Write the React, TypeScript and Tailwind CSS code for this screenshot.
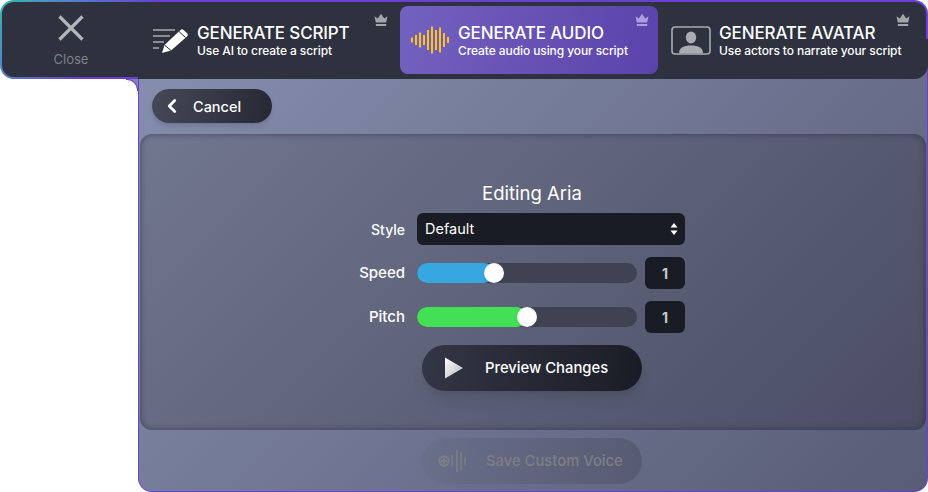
import { ChevronLeft } from 'lucide-react';

const font = "font-['Inter','Liberation_Sans',sans-serif]";

function Crown({ className }: { className: string }) {
  return (
    <svg width="14" height="14" viewBox="0 0 14 14" className={className} fill="currentColor">
      <path d="M0.5 3.2 L3.8 5.6 L7 0.8 L10.2 5.6 L13.5 3.2 L12.2 9.6 L1.8 9.6 Z" />
      <rect x="1.8" y="11" width="10.4" height="2" />
    </svg>
  );
}

function ScriptIcon() {
  return (
    <svg width="36" height="27" viewBox="0 0 36 27" className="shrink-0">
      <g stroke="#a9abb1" strokeWidth="1.6">
        <path d="M0 3H22M0 9H17M0 15H11M0 21H6" />
      </g>
      <path d="M9 26 L11.5 18 L27.5 3 Q29 1.5 30.5 3 L34.5 6.5 Q35.5 8 34 9.5 L18 23.5 Z" fill="#fff" />
      <path d="M11.5 18 L18 23.5 M26 4.5 L32.5 10.5" stroke="#2e313e" strokeWidth="1" />
    </svg>
  );
}

function WaveIcon() {
  const bars = [5, 10, 15, 10, 20, 27, 20, 25, 14, 6];
  return (
    <svg width="40" height="28" viewBox="0 0 40 28" className="shrink-0">
      {bars.map((h, i) => (
        <rect key={i} x={i * 4} y={14 - h / 2} width="2" height={h} fill="#fcc21f" />
      ))}
    </svg>
  );
}

function AvatarIcon() {
  return (
    <svg width="40" height="29" viewBox="0 0 40 29" className="shrink-0">
      <rect x="1" y="1" width="38" height="27" rx="3" fill="none" stroke="#a9abb1" strokeWidth="1.6" />
      <ellipse cx="20" cy="11.5" rx="5.2" ry="6" fill="#a9abb1" />
      <path d="M8 27.5 Q8 22 13 20.5 L17 19.5 H23 L27 20.5 Q32 22 32 27.5 Z" fill="#a9abb1" />
    </svg>
  );
}

function Tab({ title, sub, icon, active, gap, crownRight }: { title: string; sub: string; icon: React.ReactNode; active?: boolean; gap: string; crownRight: string }) {
  return (
    <div className={`relative flex h-[68px] w-[258px] items-center rounded-[8px] ${gap} ${active ? 'bg-[linear-gradient(100deg,#7361bf,#5a43aa)]' : ''}`}>
      {icon}
      <div className="text-white">
        <div className="text-[17px] leading-[20px] font-medium tracking-[-0.14px] whitespace-nowrap">{title}</div>
        <div className="text-[12px] leading-[15px] font-medium tracking-[-0.09px] whitespace-nowrap">{sub}</div>
      </div>
      <Crown className={`absolute top-[7px] ${crownRight} ${active ? 'text-[#ab9fdc]' : 'text-[#a3a5ab]'}`} />
    </div>
  );
}

function SliderRow({ label, fill, pct, color }: { label: string; fill: string; pct: number; color: string }) {
  return (
    <div className="flex items-center">
      <div className="w-[277px] pt-px pr-3 text-right text-[15px] font-medium text-white">{label}</div>
      <div className="relative h-5 w-[220px] rounded-full bg-[#3f4252]">
        <div className={`h-5 rounded-full ${color}`} style={{ width: fill }} />
        <div className="absolute top-0 size-5 -translate-x-1/2 rounded-full bg-white shadow" style={{ left: `${pct}%` }} />
      </div>
      <div className="ml-2 flex h-8 w-10 items-center justify-center rounded-[6px] bg-[#1a1c25] text-[14px] font-bold text-[#c9cad0]">1</div>
    </div>
  );
}

export default function App() {
  return (
    <div className={`h-[492px] w-[928px] overflow-hidden bg-white ${font}`}>
      <header className="relative z-10 flex h-[79px] rounded-[14px] border-2 border-transparent [background:linear-gradient(#2e313e,#2e313e)_padding-box,linear-gradient(#2e313e,#2e313e)_right_bottom/calc(100%-138px)_40px_no-repeat_border-box,linear-gradient(135deg,#2fb8a4,#4f8fc4_5%,#6a3fd2_16%,#6a3fd2)_border-box]">
        <div className="flex w-[138px] shrink-0 flex-col items-center pt-[13px]">
          <svg width="26" height="26" viewBox="0 0 26 26" fill="none" stroke="#b4b5ba" strokeWidth="3.2">
            <path d="M1.5 1.5L24.5 24.5M24.5 1.5L1.5 24.5" />
          </svg>
          <div className="mt-[9px] text-[13px] leading-[18px] text-[#7f8189]">Close</div>
        </div>
        <div className="flex gap-[2px] pt-1">
          <Tab title="GENERATE SCRIPT" sub="Use AI to create a script" icon={<ScriptIcon />} gap="gap-2 pl-[13px]" crownRight="right-[10px]" />
          <Tab title="GENERATE AUDIO" sub="Create audio using your script" icon={<WaveIcon />} active gap="gap-[7px] pl-[11px]" crownRight="right-[9px]" />
          <Tab title="GENERATE AVATAR" sub="Use actors to narrate your script" icon={<AvatarIcon />} gap="gap-2 pl-[11px]" crownRight="right-[8px]" />
        </div>
      </header>

      <div className="-mt-[14px] flex h-[427px]">
        <div className="mt-[14px] w-[138px] shrink-0">
          <div className="ml-auto size-3 bg-[#7f87a6]">
            <div className="size-3 rounded-tr-[11px] border-t border-r border-[#6a3fd2] bg-white" />
          </div>
        </div>
        <main className="flex flex-1 flex-col rounded-b-[14px] border-r border-b border-l border-[#6a3fd2] bg-[linear-gradient(135deg,#868eae,#585c76)] px-px pt-[24px]">
          <button className="ml-3 flex h-[34px] w-[120px] items-center rounded-full bg-[linear-gradient(100deg,#454958,#262833)] pl-[13px] text-[14.5px] font-medium text-white shadow-md">
            <ChevronLeft size={22} strokeWidth={3} className="-ml-1" />
            <span className="mt-px ml-[10px]">Cancel</span>
          </button>
          <section className="mt-[11px] flex h-[296px] flex-col rounded-[12px] bg-[linear-gradient(135deg,#71778f,#4a4d63)] pt-[48px] shadow-[inset_0_0_6px_rgba(30,32,45,0.55)]">
            <h1 className="pr-[2px] text-center text-[18.5px] leading-[22px] font-normal text-white">Editing Aria</h1>
            <div className="mt-[9px] flex items-center">
              <div className="w-[277px] pr-3 text-right text-[14px] font-medium text-white">Style</div>
              <div className="relative flex h-8 w-[268px] items-center rounded-[6px] bg-[#1a1c25] pl-2 text-[14.5px] text-white">
                Default
                <svg width="8" height="12" viewBox="0 0 8 12" className="absolute right-[7px]" fill="#fff">
                  <path d="M4 0L7.5 4.5H.5ZM4 12L.5 7.5H7.5Z" />
                </svg>
              </div>
            </div>
            <div className="mt-3">
              <SliderRow label="Speed" fill="77px" pct={35} color="bg-[#38a6e0]" />
            </div>
            <div className="mt-3">
              <SliderRow label="Pitch" fill="110px" pct={50} color="bg-[#43e055]" />
            </div>
            <button className="mt-3 ml-[282px] flex h-[46px] w-[220px] items-center rounded-full bg-[linear-gradient(100deg,#333644,#1a1c25)] pl-[22px] text-[14.8px] font-medium text-white shadow-lg">
              <svg width="20" height="22" viewBox="0 0 20 22"><defs><linearGradient id="pl" x1="0" y1="0" x2="1" y2="1"><stop offset="0" stopColor="#fff" /><stop offset="1" stopColor="#b5b6bb" /></linearGradient></defs><path d="M1 0.5L19 11L1 21.5Z" fill="url(#pl)" /></svg>
              <span className="ml-[21px]">Preview Changes</span>
            </button>
          </section>
          <button className="mt-2 ml-[282px] flex h-[46px] w-[220px] items-center rounded-full bg-[linear-gradient(100deg,#6a6f8a,#565a72)] pl-[15px] text-[14.8px] font-medium text-[#7d7f86]">
            <svg width="30" height="24" viewBox="0 0 30 24" fill="none" stroke="#7d7f86" strokeWidth="1.6">
              <circle cx="7" cy="12" r="4.6" strokeWidth="2.2" />
              <path d="M4 12H10M7 9V15" strokeWidth="1.8" />
              <path d="M15 6V18M20 1V23M24 3V21M28 8.5V15.5" />
            </svg>
            <span className="ml-[19px]">Save Custom Voice</span>
          </button>
        </main>
      </div>
    </div>
  );
}
